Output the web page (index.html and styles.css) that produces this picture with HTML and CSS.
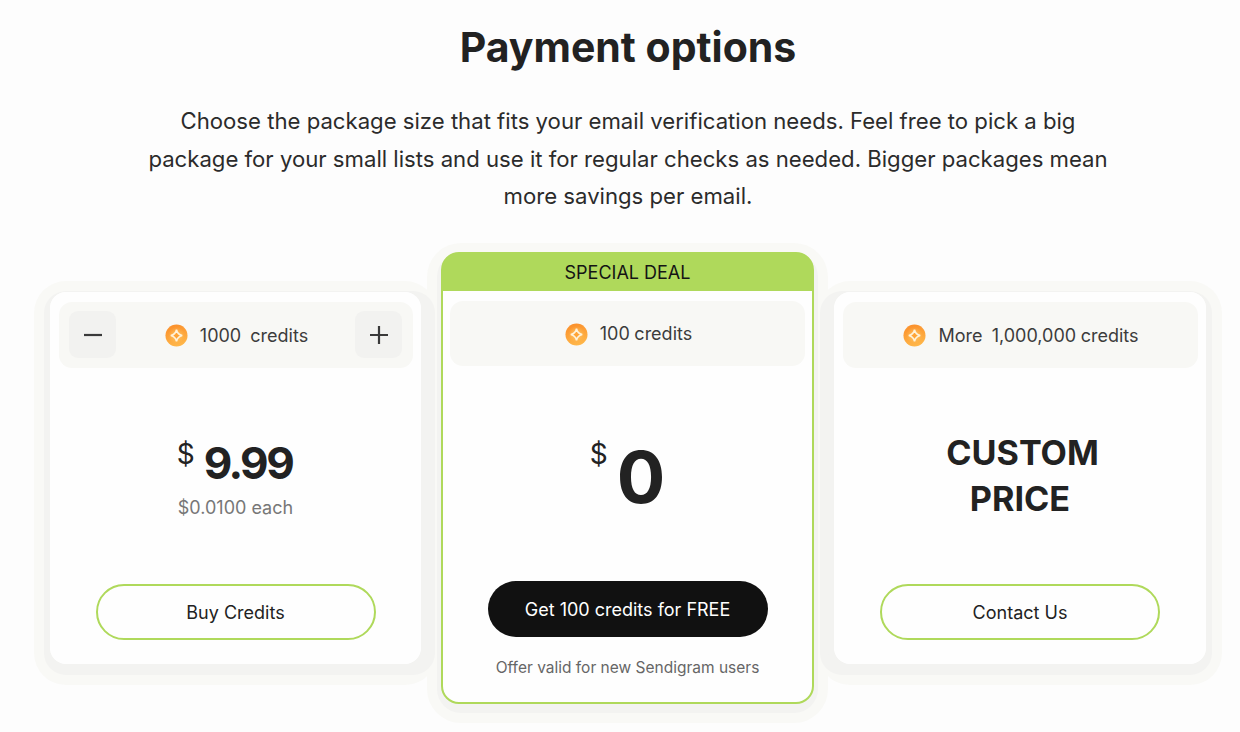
FILE: index.html
```html
<!DOCTYPE html>
<html lang="en">
<head>
<meta charset="utf-8">
<title>Payment options</title>
<link rel="stylesheet" href="styles.css">
</head>
<body>
<main class="page">
  <h1 class="title">Payment options</h1>
  <p class="intro">Choose the package size that fits your email verification needs. Feel free to pick a big<br>package for your small lists and use it for regular checks as needed. Bigger packages mean<br>more savings per email.</p>
  <section class="plans">
    <article class="card card-left">
      <div class="panel">
        <button class="step" aria-label="Decrease"><svg viewBox="0 0 20 20" width="20" height="20"><path d="M1 10h18" /></svg></button>
        <div class="credits">
          <svg class="coin" viewBox="0 0 24 24" width="23" height="23"><defs><linearGradient id="c1" x1="0.3" y1="0" x2="0.6" y2="1"><stop offset="0" stop-color="#fb8f2a"/><stop offset="1" stop-color="#ffb84a"/></linearGradient><radialGradient id="g1"><stop offset="0" stop-color="#ffd58a"/><stop offset="1" stop-color="#ffb84a" stop-opacity="0"/></radialGradient></defs><circle cx="12" cy="12" r="11.500" fill="url(#c1)"/><circle cx="12" cy="12" r="9" fill="url(#g1)"/><path d="M12 6c.7 3.500 2.500 5.300 6 6-3.500.7-5.300 2.500-6 6-.7-3.500-2.500-5.300-6-6 3.500-.7 5.300-2.500 6-6z" fill="#ffa436" stroke="#fff3da" stroke-width="1.700"/></svg>
          <span class="credit-text">1000&nbsp; credits</span>
        </div>
        <button class="step" aria-label="Increase"><svg viewBox="0 0 20 20" width="20" height="20"><path d="M1 10h18M10 1v18" /></svg></button>
      </div>
      <div class="price-block">
        <div class="price"><span class="currency">$</span><span class="amount">9.99</span></div>
        <div class="each">$0.0100 each</div>
      </div>
      <a class="btn btn-outline">Buy Credits</a>
    </article>

    <article class="card card-deal">
      <div class="deal-head">SPECIAL DEAL</div>
      <div class="deal-body">
        <div class="panel panel-center">
          <div class="credits">
            <svg class="coin" viewBox="0 0 24 24" width="23" height="23"><defs><linearGradient id="c2" x1="0.3" y1="0" x2="0.6" y2="1"><stop offset="0" stop-color="#fb8f2a"/><stop offset="1" stop-color="#ffb84a"/></linearGradient><radialGradient id="g2"><stop offset="0" stop-color="#ffd58a"/><stop offset="1" stop-color="#ffb84a" stop-opacity="0"/></radialGradient></defs><circle cx="12" cy="12" r="11.500" fill="url(#c2)"/><circle cx="12" cy="12" r="9" fill="url(#g2)"/><path d="M12 6c.7 3.500 2.500 5.300 6 6-3.500.7-5.300 2.500-6 6-.7-3.500-2.500-5.300-6-6 3.500-.7 5.300-2.500 6-6z" fill="#ffa436" stroke="#fff3da" stroke-width="1.700"/></svg>
            <span class="credit-text">100 credits</span>
          </div>
        </div>
        <div class="price price-big"><span class="currency">$</span><span class="amount">0</span></div>
        <a class="btn btn-solid">Get 100 credits for FREE</a>
        <p class="note">Offer valid for new Sendigram users</p>
      </div>
    </article>

    <article class="card card-right">
      <div class="panel panel-center">
        <div class="credits">
          <svg class="coin" viewBox="0 0 24 24" width="23" height="23"><defs><linearGradient id="c3" x1="0.3" y1="0" x2="0.6" y2="1"><stop offset="0" stop-color="#fb8f2a"/><stop offset="1" stop-color="#ffb84a"/></linearGradient><radialGradient id="g3"><stop offset="0" stop-color="#ffd58a"/><stop offset="1" stop-color="#ffb84a" stop-opacity="0"/></radialGradient></defs><circle cx="12" cy="12" r="11.500" fill="url(#c3)"/><circle cx="12" cy="12" r="9" fill="url(#g3)"/><path d="M12 6c.7 3.500 2.500 5.300 6 6-3.500.7-5.300 2.500-6 6-.7-3.500-2.500-5.300-6-6 3.500-.7 5.300-2.500 6-6z" fill="#ffa436" stroke="#fff3da" stroke-width="1.700"/></svg>
          <span class="credit-text">More&nbsp; 1,000,000 credits</span>
        </div>
      </div>
      <div class="custom"><span class="custom-first">CUSTOM</span><br>PRICE</div>
      <a class="btn btn-outline">Contact Us</a>
    </article>
  </section>
</main>
</body>
</html>
```

FILE: styles.css
```css
* { box-sizing: border-box; }
html, body { margin: 0; padding: 0; }
body {
  width: 1240px;
  height: 732px;
  overflow: hidden;
  background: #fdfdfd;
  color: #222;
  font-family: Inter, "Liberation Sans", sans-serif;
}
.page {
  width: 1156px;
  margin-left: 50px;
  padding-top: 22px;
  display: flex;
  flex-direction: column;
  align-items: center;
}
.title {
  margin: 0;
  font-size: 41px;
  line-height: 50px;
  font-weight: 700;
  color: #222;
}
.intro {
  margin: 31px 0 0;
  text-align: center;
  font-size: 22.15px;
  line-height: 37.6px;
  color: #2b2b2b;
  white-space: nowrap;
}
.plans {
  margin-top: 36px;
  display: grid;
  grid-template-columns: 371px 373px 372px;
  gap: 20px;
  align-items: center;
  isolation: isolate;
}
.card {
  height: 372px;
  padding: 10px 8.5px 24px;
  background: #fefefe;
  border-radius: 16px;
  display: flex;
  flex-direction: column;
  align-items: center;
  position: relative;
}
.card::before,
.card::after {
  content: "";
  position: absolute;
  inset: 0;
  border-radius: inherit;
}
.card::before {
  z-index: -2;
  box-shadow: 0 5px 0 16px #f9f9f6;
}
.card::after {
  z-index: -1;
  box-shadow: 0 5px 0 6px #f3f3f1;
}
.card-left::after { box-shadow: 0 5px 0 6px #f3f3f1, 8px 5px 0 6px #f3f3f1; }
.card-right::after { box-shadow: 0 5px 0 6px #f3f3f1, -8px 5px 0 6px #f3f3f1; }
.card-deal {
  height: 452px;
  padding: 0;
  border: 2px solid #afd95b;
  border-radius: 18px;
  align-items: stretch;
}
.deal-head {
  height: 38px;
  flex: none;
  margin: -1px -1px 0;
  border-radius: 16px 16px 0 0;
  background: #afd95b;
  color: #141414;
  font-size: 18px;
  line-height: 40px;
  text-align: center;
}
.deal-body {
  flex: 1;
  padding: 10px 7px 0;
  display: flex;
  flex-direction: column;
  align-items: center;
}
.panel {
  width: 100%;
  height: 66px;
  flex: none;
  padding: 0 10.5px;
  background: #f8f8f5;
  border-radius: 13px;
  display: flex;
  align-items: center;
  justify-content: space-between;
}
.panel-center {
  justify-content: center;
  padding: 0;
}
.card-deal .panel { height: 65px; }
.step {
  width: 47px;
  height: 47px;
  padding: 0;
  border: 0;
  border-radius: 9px;
  background: #f2f2f0;
  display: flex;
  align-items: center;
  justify-content: center;
}
.step path {
  fill: none;
  stroke: #3a3a3a;
  stroke-width: 2.200;
}
.credits {
  display: flex;
  align-items: center;
  gap: 12px;
  padding: 2px 0 0 2px;
}
.coin { flex: none; }
.credit-text {
  font-size: 18px;
  line-height: 24px;
  word-spacing: -0.5px;
  color: #3c3c3c;
}
.price-block {
  margin-top: 67px;
  display: flex;
  flex-direction: column;
  align-items: center;
}
.price {
  display: flex;
  align-items: flex-start;
  color: #222;
}
.currency {
  font-size: 28px;
  line-height: 36px;
  margin-top: 1px;
  margin-right: 9px;
}
.amount {
  margin-right: 2px;
  font-size: 44px;
  line-height: 56px;
  font-weight: 700;
  letter-spacing: -2.500px;
}
.each {
  margin-top: 5px;
  font-size: 18px;
  line-height: 24px;
  color: #777;
}
.price-big {
  margin-top: 67px;
}
.price-big .currency {
  margin-top: 3px;
  margin-right: 9px;
}
.price-big .amount {
  margin-right: 0;
  font-size: 72px;
  line-height: 88px;
  letter-spacing: 0;
}
.btn {
  width: 280px;
  height: 56px;
  flex: none;
  padding-top: 2px;
  border-radius: 28px;
  display: flex;
  align-items: center;
  justify-content: center;
  font-size: 18px;
}
.btn-outline {
  margin-top: auto;
  border: 2.5px solid #afd95b;
  background: #fefefe;
  color: #222;
}
.btn-solid {
  margin-top: 60px;
  background: #111;
  color: #fff;
}
.note {
  margin: 20px 0 0;
  font-size: 15.5px;
  line-height: 22px;
  color: #666;
}
.custom {
  margin-top: 62px;
  text-align: center;
  font-size: 34.2px;
  line-height: 46.5px;
  font-weight: 700;
  color: #222;
}
.custom-first { padding-left: 5px; }
```
